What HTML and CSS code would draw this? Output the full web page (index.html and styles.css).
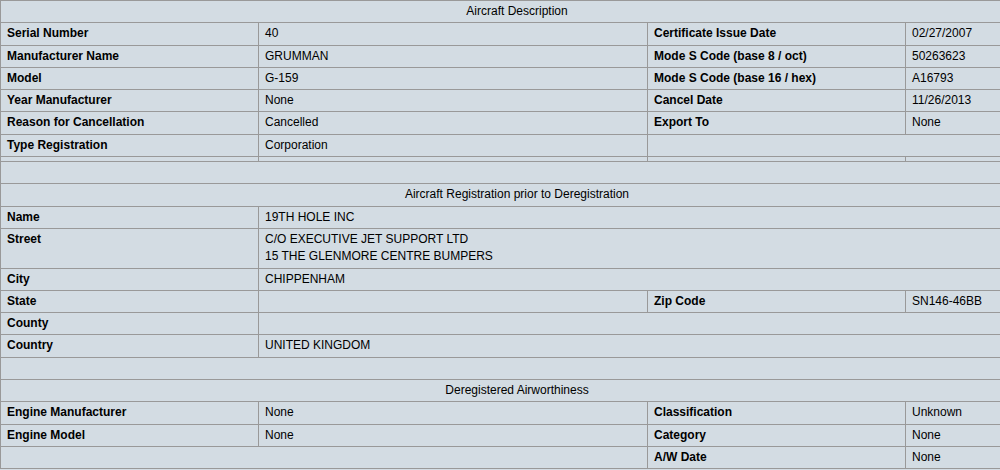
FILE: index.html
```html
<!DOCTYPE html>
<html>
<head>
<meta charset="utf-8">
<title>Aircraft Inquiry</title>
<link rel="stylesheet" href="styles.css">
</head>
<body>
<table class="grid">
  <colgroup><col class="c1"><col class="c2"><col class="c3"><col></colgroup>
  <tr><td class="h" colspan="4">Aircraft Description</td></tr>
  <tr><td class="l">Serial Number</td><td>40</td><td class="l">Certificate Issue Date</td><td>02/27/2007</td></tr>
  <tr><td class="l">Manufacturer Name</td><td>GRUMMAN</td><td class="l">Mode S Code (base 8 / oct)</td><td>50263623</td></tr>
  <tr><td class="l">Model</td><td>G-159</td><td class="l">Mode S Code (base 16 / hex)</td><td>A16793</td></tr>
  <tr><td class="l">Year Manufacturer</td><td>None</td><td class="l">Cancel Date</td><td>11/26/2013</td></tr>
  <tr><td class="l">Reason for Cancellation</td><td>Cancelled</td><td class="l">Export To</td><td>None</td></tr>
  <tr><td class="l">Type Registration</td><td>Corporation</td><td colspan="2"></td></tr>
  <tr class="thin"><td></td><td></td><td></td><td></td></tr>
  <tr><td colspan="4">&nbsp;</td></tr>
</table>
<table class="grid">
  <colgroup><col class="c1"><col class="c2"><col class="c3"><col></colgroup>
  <tr><td class="h" colspan="4">Aircraft Registration prior to Deregistration</td></tr>
  <tr><td class="l">Name</td><td colspan="3">19TH HOLE INC</td></tr>
  <tr><td class="l">Street</td><td colspan="3">C/O EXECUTIVE JET SUPPORT LTD<br>15 THE GLENMORE CENTRE BUMPERS</td></tr>
  <tr><td class="l">City</td><td colspan="3">CHIPPENHAM</td></tr>
  <tr><td class="l">State</td><td></td><td class="l">Zip Code</td><td>SN146-46BB</td></tr>
  <tr><td class="l">County</td><td colspan="3"></td></tr>
  <tr><td class="l">Country</td><td colspan="3">UNITED KINGDOM</td></tr>
  <tr><td colspan="4">&nbsp;</td></tr>
</table>
<table class="grid">
  <colgroup><col class="c1"><col class="c2"><col class="c3"><col></colgroup>
  <tr><td class="h" colspan="4">Deregistered Airworthiness</td></tr>
  <tr><td class="l">Engine Manufacturer</td><td>None</td><td class="l">Classification</td><td>Unknown</td></tr>
  <tr><td class="l">Engine Model</td><td>None</td><td class="l">Category</td><td>None</td></tr>
  <tr><td colspan="2"></td><td class="l">A/W Date</td><td>None</td></tr>
</table>
</body>
</html>
```

FILE: styles.css
```css
html, body {
  margin: 0;
  padding: 0;
  background: #d3dce3;
  overflow: hidden;
}
body {
  font-family: "Liberation Sans", Arial, Helvetica, sans-serif;
  font-size: 12px;
  color: #000;
}
.grid {
  width: 1034px;
  border-collapse: collapse;
  table-layout: fixed;
  background: #d3dce3;
}
.grid col.c1 { width: 258px; }
.grid col.c2 { width: 389px; }
.grid col.c3 { width: 258px; }
.grid td {
  border: 1px solid #999;
  padding: 2px 6px 2px 6px;
  line-height: 17.3px;
  vertical-align: top;
  text-align: left;
  white-space: nowrap;
}
.grid + .grid tr:first-child td {
  border-top: none;
}
.grid td.l {
  font-weight: bold;
}
.grid td.h {
  text-align: center;
  font-size: 12px;
}
.grid tr.thin td {
  padding: 2px 0;
  line-height: 0;
  height: 0;
}
```
